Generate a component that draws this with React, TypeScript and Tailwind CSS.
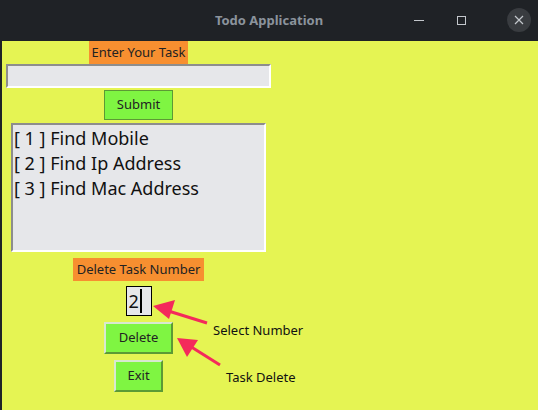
const tasks = ["Find Mobile", "Find Ip Address", "Find Mac Address"]

function TitleBar() {
  return (
    <div className="relative flex h-[41px] items-center justify-center bg-[#1f2226]">
      <span className="font-['Noto_Sans',sans-serif] text-[13px] font-bold text-[#8b939c]">
        Todo Application
      </span>
      <div className="absolute right-[7px] top-[8px] flex items-center">
        <div className="flex h-[24px] w-[24px] items-center justify-center">
          <div className="h-[1px] w-[10px] bg-[#c3c7cc]" />
        </div>
        <div className="ml-[18px] flex h-[24px] w-[24px] items-center justify-center">
          <div className="h-[9px] w-[9px] border border-[#c3c7cc]" />
        </div>
        <div className="ml-[34px] flex h-[24px] w-[24px] items-center justify-center rounded-full bg-[#393c40]">
          <svg width="10" height="10" viewBox="0 0 10 10">
            <path d="M1 1 L9 9 M9 1 L1 9" stroke="#c3c7cc" strokeWidth="1.2" />
          </svg>
        </div>
      </div>
    </div>
  )
}

export default function App() {
  return (
    <div className="h-[410px] w-[538px] overflow-hidden bg-[#1f2226] font-['Noto_Sans',sans-serif]">
      <TitleBar />
      <div className="relative ml-[2px] h-[369px] bg-[#e5f453]">
        <div className="flex w-[273px] flex-col items-center">
          <div className="flex h-[23px] w-[99px] items-center justify-center bg-[#f78f30] text-[13px] text-[#222]">
            Enter Your Task
          </div>
          <div className="h-[24px] w-[265px] border-2 border-b-white border-l-[#8d8d8d] border-r-white border-t-[#8d8d8d] bg-[#e6e7ea]" />
          <button className="mt-[2px] flex h-[30px] w-[69px] items-center justify-center border border-[#5c9a35] bg-[#7ff542] text-[13px] text-[#222]">
            Submit
          </button>
          <div className="mt-[3px] flex h-[129px] w-[255px] flex-col border-2 border-b-white border-l-[#8d8d8d] border-r-white border-t-[#8d8d8d] bg-[#e6e7ea] pl-[1px] pt-[1px] text-[18px] leading-[25px] text-[#111]">
            {tasks.map((t, i) => (
              <div key={t}>
                [ {i + 1} ] {t}
              </div>
            ))}
          </div>
          <div className="mt-[6px] flex h-[23px] w-[131px] items-center justify-center bg-[#f78f30] text-[13px] text-[#222]">
            Delete Task Number
          </div>
          <div className="mt-[5px] flex h-[30px] w-[26px] items-center border border-black bg-[#e6e7ea] pl-[2px] text-[18px] text-[#111]">
            2<span className="ml-[1px] h-[24px] w-[2px] bg-black" />
          </div>
          <button className="mt-[6px] flex h-[32px] w-[69px] items-center justify-center border-2 border-b-[#5c9a35] border-l-[#d8e8d0] border-r-[#5c9a35] border-t-[#d8e8d0] bg-[#7ff542] text-[13px] text-[#222]">
            Delete
          </button>
          <button className="mt-[6px] flex h-[32px] w-[49px] items-center justify-center border-2 border-b-[#5c9a35] border-l-[#d8e8d0] border-r-[#5c9a35] border-t-[#d8e8d0] bg-[#7ff542] text-[13px] text-[#222]">
            Exit
          </button>
        </div>

        <svg
          className="absolute left-0 top-0"
          width="536"
          height="369"
          viewBox="0 0 536 369"
        >
          <g stroke="#f42a5b" strokeWidth="3" fill="#f42a5b">
            <line x1="205" y1="282" x2="160" y2="268" />
            <polygon points="151,265 173,259 167,278" stroke="none" />
            <line x1="218" y1="324" x2="183" y2="302" />
            <polygon points="175,297 196,299 185,316" stroke="none" />
          </g>
        </svg>
        <span className="absolute left-[211px] top-[280px] text-[13px] text-[#111]">
          Select Number
        </span>
        <span className="absolute left-[224px] top-[327px] text-[13px] text-[#111]">
          Task Delete
        </span>
      </div>
    </div>
  )
}
